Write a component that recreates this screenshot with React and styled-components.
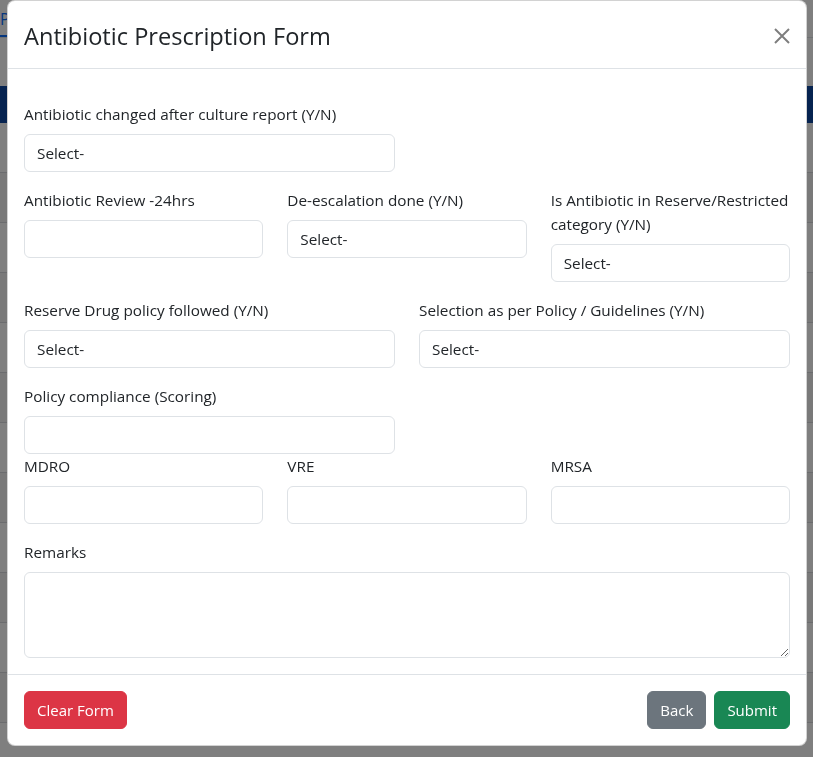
import React from 'react';
import styled, { createGlobalStyle } from 'styled-components';

const GlobalStyle = createGlobalStyle`
  * { box-sizing: border-box; }
  html, body {
    margin: 0;
    padding: 0;
    background: #fff;
    font-family: 'Open Sans', 'Noto Sans', sans-serif;
    color: #212529;
    overflow: hidden;
  }
`;

// the page that sits behind the backdrop
const Page = styled.div`
  height: 757px;
  background: #fff;
`;

const Tabs = styled.div`
  display: flex;
  height: 38px;
  border-bottom: 1px solid #dee2e6;
`;

const Tab = styled.div`
  padding: 8px 16px 0 0;
  color: #0d6efd;
  font-size: 16px;
  border-bottom: 2px solid #0d6efd;
`;

const TableHead = styled.div`
  margin-top: 48px;
  height: 37px;
  background: #0d47a1;
`;

const TableRow = styled.div`
  height: 50px;
  border-bottom: 1px solid #d6d9dc;
  background: ${({ striped }) => (striped ? '#f2f2f2' : '#fff')};
`;

const Backdrop = styled.div`
  position: fixed;
  inset: 0;
  background: rgba(0, 0, 0, 0.5);
`;

const Modal = styled.div`
  position: fixed;
  top: 0;
  left: 7px;
  width: 800px;
  background: #fff;
  border: 1px solid rgba(0, 0, 0, 0.175);
  border-radius: 8px;
  display: flex;
  flex-direction: column;
`;

const Header = styled.div`
  display: flex;
  align-items: center;
  padding: 17px 16px 14px;
  border-bottom: 1px solid #dee2e6;
`;

const Title = styled.h5`
  margin: 0;
  font-size: 23.6px;
  font-weight: 500;
  line-height: 36px;
  color: #212529;
`;

const CloseButton = styled.button`
  width: 32px;
  height: 32px;
  padding: 8px;
  margin: -8px -8px -8px auto;
  border: 0;
  background: transparent;
  opacity: 0.5;
  display: flex;
  align-items: center;
  justify-content: center;
  cursor: pointer;
`;

const Body = styled.div`
  padding: 33px 16px 0;
`;

const Row = styled.div`
  display: grid;
  grid-template-columns: repeat(${({ cols }) => cols}, 1fr);
  align-items: start;
  column-gap: 24px;
`;

const Group = styled.div`
  display: flex;
  flex-direction: column;
  margin-bottom: ${({ tight }) => (tight ? 0 : 16)}px;
`;

const Label = styled.label`
  font-size: 15.3px;
  line-height: 24px;
  margin-bottom: 8px;
`;

const fieldStyles = `
  width: 100%;
  height: 38px;
  padding: 6px 12px;
  font-family: inherit;
  font-size: 15.3px;
  line-height: 24px;
  color: #212529;
  background: #fff;
  border: 1px solid #dee2e6;
  border-radius: 6px;
  outline: none;
`;

const Input = styled.input`
  ${fieldStyles}
`;

const Select = styled.select`
  ${fieldStyles}
  appearance: none;
  -webkit-appearance: none;
`;

const TextArea = styled.textarea`
  ${fieldStyles}
  height: 86px;
  resize: vertical;
`;

const Footer = styled.div`
  display: flex;
  align-items: center;
  justify-content: space-between;
  padding: 12px;
  border-top: 1px solid #dee2e6;
  margin-top: 16px;
`;

const ButtonGroup = styled.div`
  display: flex;
`;

const colors = {
  danger: '#dc3545',
  secondary: '#6c757d',
  success: '#198754',
};

const Button = styled.button`
  margin: 4px;
  height: 38px;
  padding: 6px 12px;
  font-family: inherit;
  font-size: 15px;
  line-height: 24px;
  color: #fff;
  background: ${({ variant }) => colors[variant]};
  border: 1px solid ${({ variant }) => colors[variant]};
  border-radius: 6px;
  cursor: pointer;
`;

const SelectField = ({ label }) => (
  <Group>
    <Label>{label}</Label>
    <Select defaultValue="">
      <option value="">Select-</option>
      <option value="Y">Y</option>
      <option value="N">N</option>
    </Select>
  </Group>
);

const TextField = ({ label, tight }) => (
  <Group tight={tight}>
    <Label>{label}</Label>
    <Input type="text" />
  </Group>
);

export default function App() {
  const rows = [false, true, false, true, false, true, false, true, false, true, false, true];

  return (
    <>
      <GlobalStyle />
      <Page>
        <Tabs>
          <Tab>P</Tab>
        </Tabs>
        <TableHead />
        {rows.map((striped, i) => (
          <TableRow key={i} striped={striped} />
        ))}
      </Page>
      <Backdrop />
      <Modal>
        <Header>
          <Title>Antibiotic Prescription Form</Title>
          <CloseButton aria-label="Close">
            <svg width="16" height="16" viewBox="0 0 16 16">
              <path d="M1 1L15 15M15 1L1 15" stroke="#000" strokeWidth="2" />
            </svg>
          </CloseButton>
        </Header>
        <Body>
          <Row cols={2}>
            <SelectField label="Antibiotic changed after culture report (Y/N)" />
          </Row>
          <Row cols={3}>
            <TextField label="Antibiotic Review -24hrs" />
            <SelectField label="De-escalation done (Y/N)" />
            <SelectField label="Is Antibiotic in Reserve/Restricted category (Y/N)" />
          </Row>
          <Row cols={2}>
            <SelectField label="Reserve Drug policy followed (Y/N)" />
            <SelectField label="Selection as per Policy / Guidelines (Y/N)" />
          </Row>
          <Row cols={2}>
            <TextField label="Policy compliance (Scoring)" tight />
          </Row>
          <Row cols={3}>
            <TextField label="MDRO" />
            <TextField label="VRE" />
            <TextField label="MRSA" />
          </Row>
          <Group tight>
            <Label>Remarks</Label>
            <TextArea rows={3} />
          </Group>
        </Body>
        <Footer>
          <Button variant="danger">Clear Form</Button>
          <ButtonGroup>
            <Button variant="secondary">Back</Button>
            <Button variant="success">Submit</Button>
          </ButtonGroup>
        </Footer>
      </Modal>
    </>
  );
}
